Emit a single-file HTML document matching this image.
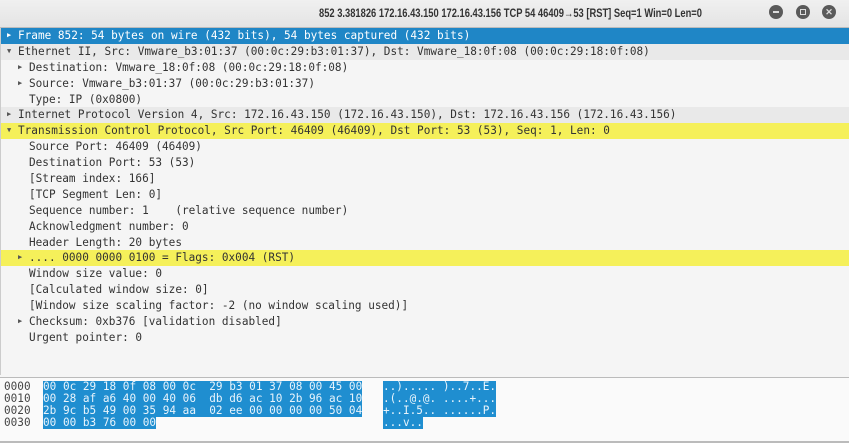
<!DOCTYPE html><html><head><style>
body{margin:0;width:849px;height:443px;overflow:hidden;background:#f5f5f5;font-family:"DejaVu Sans Mono","Liberation Mono",monospace;}
.title{position:absolute;left:0;top:0;width:849px;height:27px;background:linear-gradient(#f0f0f0,#e4e4e4);border-bottom:1px solid #bcbcbc;}
.title span{position:absolute;left:319px;top:6px;font:bold 12px "Liberation Sans",sans-serif;color:#333;white-space:nowrap;display:inline-block;transform:scaleX(0.78);transform-origin:0 0;}
.btn{position:absolute;top:5px;width:14px;height:14px;border-radius:50%;background:#5a5a5a;}
.tree{position:absolute;left:0;top:28px;width:849px;height:347px;background:#f5f5f5;border-left:1px solid #ccc;}
.r{height:15.9px;line-height:15.9px;font-size:11.05px;color:#333;white-space:pre;position:relative;padding-left:17px;}
.r.c{padding-left:28px}
.r .a{position:absolute;font-size:7px;color:#555;}
.sel{background:#1f86c6;color:#fff;}
.sel .a{color:#fff}
.g{background:#e9e9e9;}
.y{background:#f5f05a;}
.hex{position:absolute;left:0;top:377px;width:849px;height:63px;background:#fafafa;border-top:1px solid #bbb;border-bottom:2px solid #bbb;font-size:11.05px;}
.hl{position:absolute;height:12px;line-height:12px;white-space:pre;color:#444;}
.b{background:#1f8ed0;color:#e8f4fc;}
</style></head><body>
<div class="title"><span>852 3.381826 172.16.43.150 172.16.43.156 TCP 54 46409→53 [RST] Seq=1 Win=0 Len=0</span>
<div class="btn" style="left:769px"><div style="position:absolute;left:4px;top:6px;width:6px;height:2px;background:#ddd"></div></div>
<div class="btn" style="left:796px"><div style="position:absolute;left:4px;top:4px;width:4px;height:4px;border:1px solid #ddd"></div></div>
<div class="btn" style="left:822px"><div style="position:absolute;left:0;top:0;width:14px;height:14px;color:#ddd;font:bold 9px sans-serif;text-align:center;line-height:14px">✕</div></div>
</div>
<div class="tree">
<div class="r sel"><span class="a" style="left:6px">▶</span>Frame 852: 54 bytes on wire (432 bits), 54 bytes captured (432 bits)</div>
<div class="r g"><span class="a" style="left:6px">▼</span>Ethernet II, Src: Vmware_b3:01:37 (00:0c:29:b3:01:37), Dst: Vmware_18:0f:08 (00:0c:29:18:0f:08)</div>
<div class="r c"><span class="a" style="left:17px">▶</span>Destination: Vmware_18:0f:08 (00:0c:29:18:0f:08)</div>
<div class="r c"><span class="a" style="left:17px">▶</span>Source: Vmware_b3:01:37 (00:0c:29:b3:01:37)</div>
<div class="r c">Type: IP (0x0800)</div>
<div class="r g"><span class="a" style="left:6px">▶</span>Internet Protocol Version 4, Src: 172.16.43.150 (172.16.43.150), Dst: 172.16.43.156 (172.16.43.156)</div>
<div class="r y"><span class="a" style="left:6px">▼</span>Transmission Control Protocol, Src Port: 46409 (46409), Dst Port: 53 (53), Seq: 1, Len: 0</div>
<div class="r c">Source Port: 46409 (46409)</div>
<div class="r c">Destination Port: 53 (53)</div>
<div class="r c">[Stream index: 166]</div>
<div class="r c">[TCP Segment Len: 0]</div>
<div class="r c">Sequence number: 1    (relative sequence number)</div>
<div class="r c">Acknowledgment number: 0</div>
<div class="r c">Header Length: 20 bytes</div>
<div class="r c y"><span class="a" style="left:17px">▶</span>.... 0000 0000 0100 = Flags: 0x004 (RST)</div>
<div class="r c">Window size value: 0</div>
<div class="r c">[Calculated window size: 0]</div>
<div class="r c">[Window size scaling factor: -2 (no window scaling used)]</div>
<div class="r c"><span class="a" style="left:17px">▶</span>Checksum: 0xb376 [validation disabled]</div>
<div class="r c">Urgent pointer: 0</div>
</div>
<div class="hex">
<div class="hl" style="left:4px;top:3px">0000</div><div class="hl b" style="left:43px;top:3px">00 0c 29 18 0f 08 00 0c  29 b3 01 37 08 00 45 00</div><div class="hl b" style="left:383px;top:3px">..)..... )..7..E.</div>
<div class="hl" style="left:4px;top:15px">0010</div><div class="hl b" style="left:43px;top:15px">00 28 af a6 40 00 40 06  db d6 ac 10 2b 96 ac 10</div><div class="hl b" style="left:383px;top:15px">.(..@.@. ....+...</div>
<div class="hl" style="left:4px;top:27px">0020</div><div class="hl b" style="left:43px;top:27px">2b 9c b5 49 00 35 94 aa  02 ee 00 00 00 00 50 04</div><div class="hl b" style="left:383px;top:27px">+..I.5.. ......P.</div>
<div class="hl" style="left:4px;top:39px">0030</div><div class="hl b" style="left:43px;top:39px">00 00 b3 76 00 00</div><div class="hl b" style="left:383px;top:39px">...v..</div>
</div>
</body></html>
